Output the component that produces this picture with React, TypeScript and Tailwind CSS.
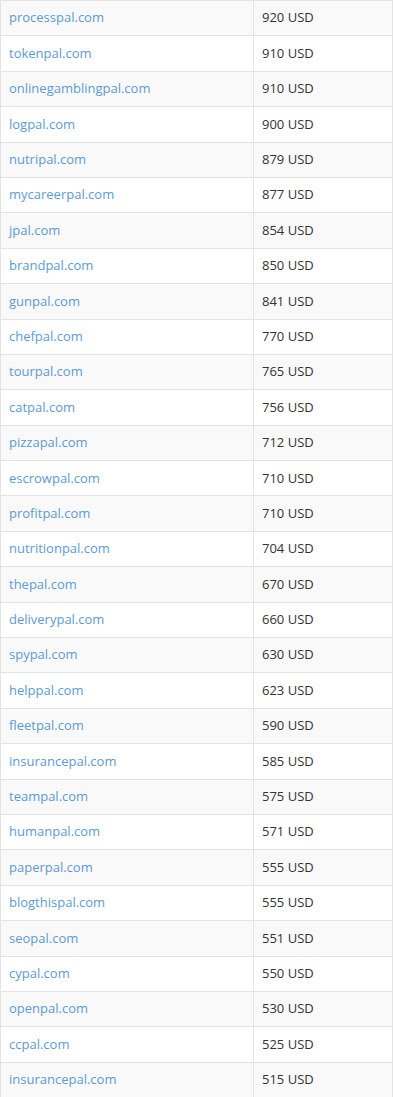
import React from 'react';

const rows: [string, number][] = [
  ['processpal.com', 920],
  ['tokenpal.com', 910],
  ['onlinegamblingpal.com', 910],
  ['logpal.com', 900],
  ['nutripal.com', 879],
  ['mycareerpal.com', 877],
  ['jpal.com', 854],
  ['brandpal.com', 850],
  ['gunpal.com', 841],
  ['chefpal.com', 770],
  ['tourpal.com', 765],
  ['catpal.com', 756],
  ['pizzapal.com', 712],
  ['escrowpal.com', 710],
  ['profitpal.com', 710],
  ['nutritionpal.com', 704],
  ['thepal.com', 670],
  ['deliverypal.com', 660],
  ['spypal.com', 630],
  ['helppal.com', 623],
  ['fleetpal.com', 590],
  ['insurancepal.com', 585],
  ['teampal.com', 575],
  ['humanpal.com', 571],
  ['paperpal.com', 555],
  ['blogthispal.com', 555],
  ['seopal.com', 551],
  ['cypal.com', 550],
  ['openpal.com', 530],
  ['ccpal.com', 525],
  ['insurancepal.com', 515],
];

const App: React.FC = () => {
  return (
    <div
      className="w-[393px] bg-white text-[13px] text-[#333333]"
      style={{ fontFamily: '"Open Sans", "Liberation Sans", sans-serif' }}
    >
      <div className="border-l border-r border-t border-[#e3e3e3]">
        {rows.map(([domain, price], i) => (
          <div
            key={i}
            className={`flex h-[35.4px] border-b border-[#e3e3e3] ${i % 2 === 0 ? 'bg-[#f9f9f9]' : 'bg-white'}`}
          >
            <div className="w-[253px] flex items-center pl-2 border-r border-[#e3e3e3]">
              <a href="#" className="text-[#5c9bd3] no-underline">
                {domain}
              </a>
            </div>
            <div className="flex-1 flex items-center pl-2">{price} USD</div>
          </div>
        ))}
      </div>
    </div>
  );
};

export default App;
